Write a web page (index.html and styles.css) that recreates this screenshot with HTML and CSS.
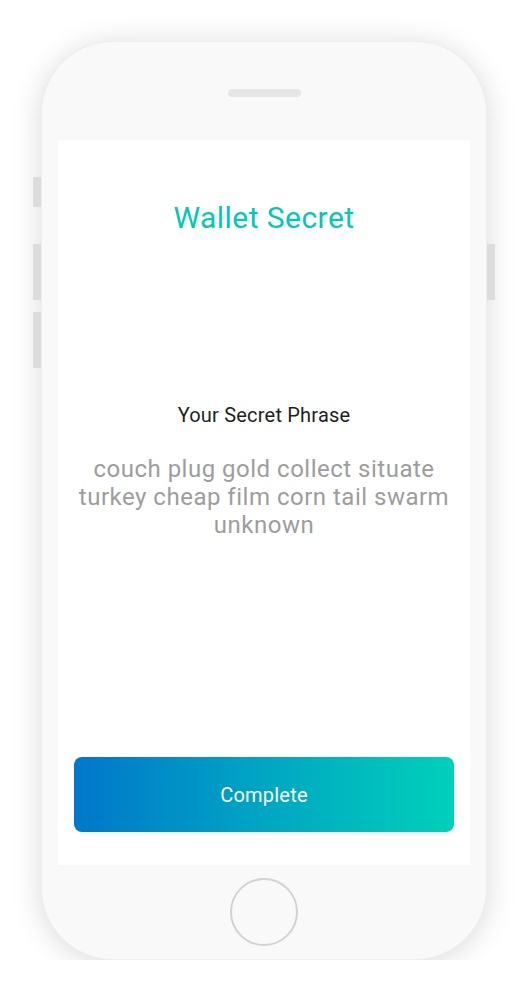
FILE: index.html
```html
<!DOCTYPE html>
<html lang="en">
<head>
<meta charset="utf-8">
<title>Wallet Secret</title>
<link rel="stylesheet" href="styles.css">
</head>
<body>
<div class="stage">
  <div class="phone">
    <span class="side-btn left b1"></span>
    <span class="side-btn left b2"></span>
    <span class="side-btn left b3"></span>
    <span class="side-btn right b2"></span>
    <div class="top-bezel"><span class="speaker"></span></div>
    <main class="screen">
      <h1 class="title">Wallet Secret</h1>
      <h2 class="subtitle">Your Secret Phrase</h2>
      <p class="phrase">couch plug gold collect situate turkey cheap film corn tail swarm unknown</p>
      <button class="complete">Complete</button>
    </main>
    <div class="bottom-bezel"><span class="home"></span></div>
  </div>
</div>
</body>
</html>
```
FILE: styles.css
```css
* { box-sizing: border-box; }
html, body { margin: 0; padding: 0; background: #ffffff; }
body { font-family: Roboto, "Noto Sans", Arial, sans-serif; }

.stage {
  display: flex;
  justify-content: center;
  padding-top: 41px;
}

.phone {
  position: relative;
  width: 446px;
  height: 919px;
  border-radius: 72px;
  background: #f9f9f9;
  border: 1px solid #eeeeee;
  box-shadow: 0 3px 30px rgba(0, 0, 0, 0.15);
  display: flex;
  flex-direction: column;
  padding: 0 16px;
}

.side-btn {
  position: absolute;
  width: 8px;
  background: #dcdcdc;
}
.side-btn.left { left: -9px; }
.side-btn.right { right: -9px; }
.side-btn.b1 { top: 135px; height: 30px; }
.side-btn.b2 { top: 202px; height: 56px; }
.side-btn.b3 { top: 270px; height: 56px; }

.top-bezel {
  height: 98px;
  display: flex;
  justify-content: center;
  padding-top: 47px;
}
.speaker {
  width: 73px;
  height: 8px;
  border-radius: 4px;
  background: #e6e6e6;
}

.screen {
  height: 725px;
  background: #ffffff;
  display: flex;
  flex-direction: column;
  align-items: center;
  padding: 60px 16px 33px;
  text-align: center;
}

.title {
  margin: 0;
  font-size: 30px;
  font-weight: 400;
  letter-spacing: 0.45px;
  color: #00c9b6;
  line-height: 35px;
}

.subtitle {
  margin: 169px 0 0;
  font-size: 20px;
  font-weight: 400;
  letter-spacing: 0.2px;
  color: #1f1f1f;
  line-height: 23px;
}

.phrase {
  margin: 28px 0 0;
  font-size: 24px;
  line-height: 28px;
  letter-spacing: 0.5px;
  color: #9d9d9d;
}

.complete {
  margin-top: auto;
  width: 100%;
  height: 75px;
  border: 0;
  border-radius: 8px;
  background: linear-gradient(90deg, #0077cb 0%, #00a6c2 50%, #00d0ba 100%);
  color: #ffffff;
  font-family: Roboto, "Noto Sans", Arial, sans-serif;
  font-size: 20px;
  font-weight: 400;
  letter-spacing: 0.2px;
}

.bottom-bezel {
  flex: 1;
  display: flex;
  justify-content: center;
  align-items: flex-start;
  padding-top: 13px;
}
.home {
  width: 68px;
  height: 68px;
  border-radius: 50%;
  border: 2px solid #d2d2d2;
}
```
